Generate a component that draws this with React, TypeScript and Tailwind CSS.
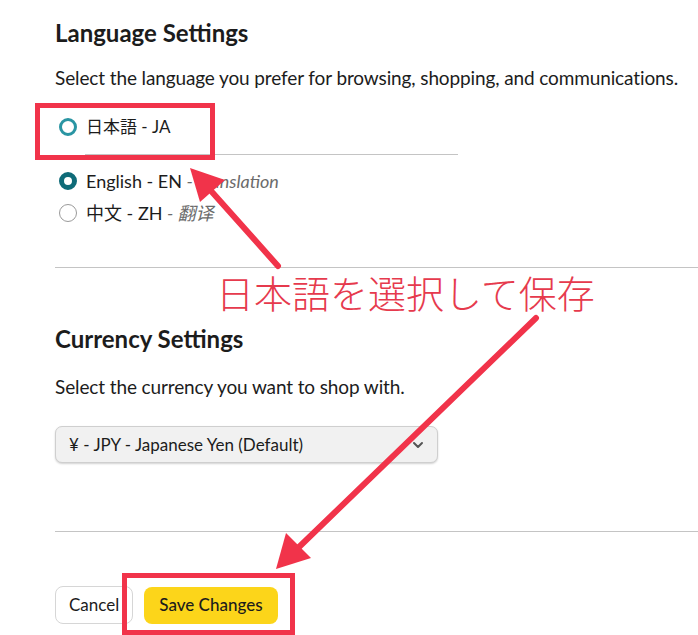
import { ChevronDown } from 'lucide-react';

const sans = 'font-["Lato","Noto_Sans_CJK_JP",sans-serif]';

function Radio({ state }: { state: 'focus' | 'checked' | 'off' }) {
  if (state === 'checked') {
    return <span className="w-[18px] h-[18px] rounded-full border-[5px] border-[#0f6b78] bg-white shrink-0" />;
  }
  if (state === 'focus') {
    return <span className="w-[18px] h-[18px] rounded-full border-[3px] border-[#2a95a3] bg-white shrink-0" />;
  }
  return <span className="w-[18px] h-[18px] rounded-full border border-[#9a9a9a] bg-white shrink-0" />;
}

export default function App() {
  return (
    <div className={`relative w-[698px] h-[635px] overflow-hidden bg-white text-[#1c1c1c] ${sans}`}>
      <div className="pl-[55px] pt-[18px]">
        <h2 className="text-[24px] leading-[30px] font-bold">Language Settings</h2>
        <p className="mt-[17px] text-[19px] leading-[26px] tracking-[-0.12px]">
          Select the language you prefer for browsing, shopping, and communications.
        </p>

        <div className="mt-[23px] flex flex-col">
          <label className="flex items-center gap-[9px] h-[26px] pl-[4px]">
            <Radio state="focus" />
            <span className="text-[17px]">日本語 - JA</span>
          </label>
          <div className="ml-[30px] w-[373px] mt-[14px] border-b border-[#c4c4c4]" />
          <label className="mt-[13px] flex items-center gap-[9px] h-[26px] pl-[4px]">
            <Radio state="checked" />
            <span className="text-[18px]">
              English - EN <span className="italic text-[#6b6b6b]">- Translation</span>
            </span>
          </label>
          <label className="mt-[6px] flex items-center gap-[9px] h-[26px] pl-[4px]">
            <Radio state="off" />
            <span className="text-[18px]">
              中文 - ZH <span className="italic text-[#6b6b6b]">- 翻译</span>
            </span>
          </label>
        </div>

        <div className="mt-[41px] border-b border-[#c4c4c4]" />

        <h2 className="mt-[56px] text-[24px] leading-[30px] font-bold">Currency Settings</h2>
        <p className="mt-[20px] text-[19px] leading-[26px] tracking-[-0.12px]">
          Select the currency you want to shop with.
        </p>

        <div className="mt-[26px] w-[383px] h-[37px] flex items-center justify-between pl-[13px] pr-[11px] rounded-[7px] border border-[#cfcfcf] bg-[#f1f1f1] shadow-[0_1px_2px_rgba(0,0,0,0.18)]">
          <span className="text-[17px]">¥ - JPY - Japanese Yen (Default)</span>
          <ChevronDown size={16} strokeWidth={3} className="text-[#555]" />
        </div>

        <div className="mt-[68px] border-b border-[#c4c4c4]" />

        <div className="mt-[54px] flex items-center gap-[11px]">
          <button className="h-[38px] px-[13px] rounded-[8px] border border-[#d6d6d6] bg-white text-[17px]">
            Cancel
          </button>
          <button className="h-[37px] px-[15px] rounded-[8px] bg-[#fcd51a] text-[17px] font-medium">
            Save Changes
          </button>
        </div>
      </div>

      {/* annotations */}
      <svg className="absolute inset-0 pointer-events-none" width="698" height="635" viewBox="0 0 698 635">
        <rect x="37.5" y="105.5" width="175" height="52" fill="none" stroke="#f1334a" strokeWidth="5" />
        <rect x="124.5" y="575.5" width="168" height="57" fill="none" stroke="#f1334a" strokeWidth="5" />
        <line x1="278" y1="266" x2="212" y2="192" stroke="#f1334a" strokeWidth="6" strokeLinecap="round" />
        <polygon points="190,168 225,180 200,202" fill="#f1334a" />
        <line x1="536" y1="318" x2="298" y2="548" stroke="#f1334a" strokeWidth="6" strokeLinecap="round" />
        <polygon points="276,569 286,533 311,558" fill="#f1334a" />
      </svg>
      <div className='absolute left-[216px] top-[268px] text-[38px] leading-[48px] font-light text-[#e63a4d] font-["Noto_Sans_CJK_JP",sans-serif]'>
        日本語を選択して保存
      </div>
    </div>
  );
}
